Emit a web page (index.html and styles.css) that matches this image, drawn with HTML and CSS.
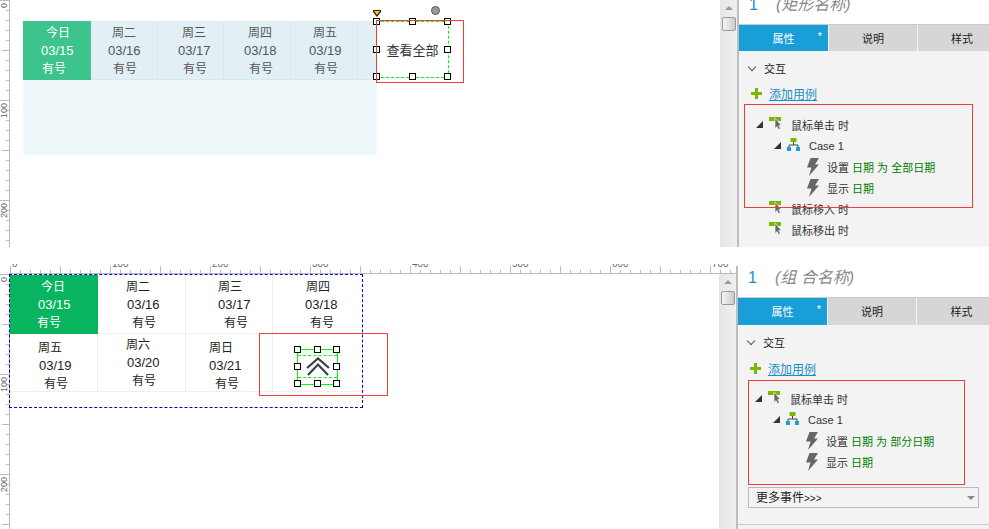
FILE: index.html
```html
<!DOCTYPE html>
<html lang="zh-CN">
<head>
    <meta charset="UTF-8">
    <link rel="stylesheet" href="styles.css">
    <title>查看全部</title>
</head>
<body>
<svg class="defs" width="0" height="0">
    <symbol id="ev" viewBox="0 0 13 13">
        <rect x="0" y="0" width="12" height="4" fill="#7ab800"/>
        <path d="M6 1V11.5L8 9.6 9.6 12.6 11.4 11.8 9.8 8.6 12.4 8.4Z" fill="#666" stroke="#f3f3f3" stroke-width=".7"/>
    </symbol>
    <symbol id="case" viewBox="0 0 13 13">
        <rect x="3.5" y="0" width="6" height="4" fill="#7ab800"/>
        <path d="M6.5 4V7M2 9V7H11V9" fill="none" stroke="#444"/>
        <rect x="0" y="9" width="4" height="4" fill="#1a9ed8"/>
        <rect x="9" y="9" width="4" height="4" fill="#1a9ed8"/>
    </symbol>
    <symbol id="bolt" viewBox="0 0 12 18">
        <path d="M3.5 0H12L8 6.5H12L2 18 4.5 9.5H0Z" fill="#666"/>
    </symbol>
</svg>

<!-- 上半部分 -->
<div class="shot shot-a">
    <div class="work">
        <div class="work-row">
            <div class="ruler-v"><span class="rv-label rv-0">0</span><span class="rv-label rv-100">100</span><span class="rv-label rv-200">200</span></div>
            <div class="stage">
                <div class="tbl">
                    <div class="tbl-head">
                        <div class="tcell ta1 today"><span class="day">今日</span><span class="date">03/15</span><span class="num">有号</span></div>
                        <div class="tcell ta2"><span class="day">周二</span><span class="date">03/16</span><span class="num">有号</span></div>
                        <div class="tcell ta3"><span class="day">周三</span><span class="date">03/17</span><span class="num">有号</span></div>
                        <div class="tcell ta4"><span class="day">周四</span><span class="date">03/18</span><span class="num">有号</span></div>
                        <div class="tcell ta5"><span class="day">周五</span><span class="date">03/19</span><span class="num">有号</span></div>
                        <div class="tcell ta6"></div>
                    </div>
                </div>

                <div class="sel sel-a">
                    <span class="sel-text">查看全部</span>
                    <i class="h tl"></i><i class="h tc"></i><i class="h tr"></i>
                    <i class="h ml"></i><i class="h mr"></i>
                    <i class="h bl"></i><i class="h bc"></i><i class="h br"></i>
                </div>
                <div class="redbox redbox-a"></div>
                <div class="marker"></div>
                <div class="rotate"></div>
            </div>
            <div class="scroll"><div class="scroll-up"></div><div class="scroll-thumb"></div></div>
        </div>
    </div>
    <div class="panel">
        <div class="panel-head"><span class="p-no">1</span><span class="p-name">(矩形名称)</span></div>
        <div class="tabs">
            <div class="tab on">属性<em>*</em></div>
            <div class="tab">说明</div>
            <div class="tab">样式</div>
        </div>
        <div class="sec"><span class="chev"></span>交互</div>
        <div class="add"><b class="plus"></b><a>添加用例</a></div>
        <div class="tree">
            <div class="row l0"><i class="tri"></i><svg class="ico"><use href="#ev"/></svg>鼠标单击 时</div>
            <div class="row l1"><i class="tri"></i><svg class="ico"><use href="#case"/></svg>Case 1</div>
            <div class="row l2"><svg class="bolt"><use href="#bolt"/></svg>设置&nbsp;<span class="g">日期 为 全部日期</span></div>
            <div class="row l2"><svg class="bolt"><use href="#bolt"/></svg>显示&nbsp;<span class="g">日期</span></div>
            <div class="row l0 flat"><svg class="ico"><use href="#ev"/></svg>鼠标移入 时</div>
            <div class="row l0 flat"><svg class="ico"><use href="#ev"/></svg>鼠标移出 时</div>
        </div>
        <div class="redbox redbox-p1"></div>
    </div>
</div>

<!-- 下半部分 -->
<div class="shot shot-b">
    <div class="work">
        <div class="ruler-h"><span>0</span><span>100</span><span>200</span><span>300</span><span>400</span><span>500</span><span>600</span><span>700</span></div>
        <div class="work-row">
            <div class="ruler-v"><span class="rv-label rv-0">0</span><span class="rv-label rv-100">100</span><span class="rv-label rv-200">200</span></div>
            <div class="stage">
                <div class="group">
                    <div class="grp-grid">
                        <div class="gcell g1 today"><span class="day">今日</span><span class="date">03/15</span><span class="num">有号</span></div>
                        <div class="gcell g2"><span class="day">周二</span><span class="date">03/16</span><span class="num">有号</span></div>
                        <div class="gcell g3"><span class="day">周三</span><span class="date">03/17</span><span class="num">有号</span></div>
                        <div class="gcell g4"><span class="day">周四</span><span class="date">03/18</span><span class="num">有号</span></div>
                        <div class="gcell g5"><span class="day">周五</span><span class="date">03/19</span><span class="num">有号</span></div>
                        <div class="gcell g6"><span class="day">周六</span><span class="date">03/20</span><span class="num">有号</span></div>
                        <div class="gcell g7"><span class="day">周日</span><span class="date">03/21</span><span class="num">有号</span></div>
                        <div class="gcell g8"></div>
                    </div>
                    <div class="redbox redbox-b"></div>
                    <div class="sel sel-b">
                        <div class="sel-inner">
                            <svg class="arrows" width="24" height="20" viewBox="0 0 24 20">
                                <path d="M1 11 12 1.5 23 11M2 18 12 7.5 22 18" fill="none" stroke="#3c3c4a" stroke-width="2.2"/>
                            </svg>
                        </div>
                        <i class="h tl"></i><i class="h tc"></i><i class="h tr"></i>
                        <i class="h ml"></i><i class="h mr"></i>
                        <i class="h bl"></i><i class="h bc"></i><i class="h br"></i>
                    </div>
                </div>
            </div>
            <div class="scroll"><div class="scroll-up"></div><div class="scroll-thumb"></div></div>
        </div>
    </div>
    <div class="panel">
        <div class="panel-head"><span class="p-no">1</span><span class="p-name">(组 合名称)</span></div>
        <div class="tabs">
            <div class="tab on">属性<em>*</em></div>
            <div class="tab">说明</div>
            <div class="tab">样式</div>
        </div>
        <div class="sec"><span class="chev"></span>交互</div>
        <div class="add"><b class="plus"></b><a>添加用例</a></div>
        <div class="tree">
            <div class="row l0"><i class="tri"></i><svg class="ico"><use href="#ev"/></svg>鼠标单击 时</div>
            <div class="row l1"><i class="tri"></i><svg class="ico"><use href="#case"/></svg>Case 1</div>
            <div class="row l2"><svg class="bolt"><use href="#bolt"/></svg>设置&nbsp;<span class="g">日期 为 部分日期</span></div>
            <div class="row l2"><svg class="bolt"><use href="#bolt"/></svg>显示&nbsp;<span class="g">日期</span></div>
        </div>
        <div class="more"><span>更多事件<small>&gt;&gt;&gt;</small></span><i class="more-arrow"></i></div>
        <div class="panel-end"></div>
        <div class="redbox redbox-p2"></div>
    </div>
</div>
</body>
</html>
```

FILE: styles.css
```css
body{
    margin: 0;
    padding: 0;
    width: 989px;
    height: 529px;
    overflow: hidden;
    background: #fff;
    font-family: "Liberation Sans", "Noto Sans CJK SC", sans-serif;
    font-size: 11px;
    color: #222;
}
.defs{
    position: absolute;
}
.shot{
    display: flex;
    overflow: hidden;
}
.shot-a{
    height: 247px;
}
.shot-b{
    height: 282px;
}
.work{
    flex: 1;
    min-width: 0;
    display: flex;
    flex-direction: column;
}
.work-row{
    flex: 1;
    display: flex;
    min-height: 0;
}
.stage{
    flex: 1;
    position: relative;
}

/* 标尺 */
.ruler-v{
    width: 10px;
    flex: none;
    position: relative;
    overflow: hidden;
    background:
        linear-gradient(#bbb, #bbb) right top / 1px 100% no-repeat,
        repeating-linear-gradient(to bottom, #bbb 0 1px, transparent 1px 10px) right top / 4px 100% no-repeat,
        repeating-linear-gradient(to bottom, #bbb 0 1px, transparent 1px 50px) right top / 8px 100% no-repeat,
        repeating-linear-gradient(to bottom, #bbb 0 1px, transparent 1px 100px) right top / 10px 100% no-repeat;
}
.ruler-h{
    height: 10px;
    margin-top: 17px;
    margin-left: 9px;
    display: flex;
    overflow: hidden;
    background:
        linear-gradient(#bbb, #bbb) left bottom / 100% 1px no-repeat,
        repeating-linear-gradient(to right, transparent 0 1px, #bbb 1px 2px, transparent 2px 10px) left bottom / 100% 4px no-repeat,
        repeating-linear-gradient(to right, transparent 0 1px, #bbb 1px 2px, transparent 2px 50px) left bottom / 100% 8px no-repeat;
}
.ruler-h span{
    width: 100px;
    flex: none;
    box-sizing: border-box;
    padding-left: 3px;
    margin-top: -6px;
    font-size: 10px;
    line-height: 12px;
    color: #666;
}
.rv-label{
    position: absolute;
    left: 0;
    writing-mode: vertical-rl;
    transform: rotate(180deg);
    font-size: 9px;
    line-height: 9px;
    color: #666;
}
.rv-0{ top: 3px; }
.rv-100{ top: 103px; }
.rv-200{ top: 203px; }

/* 上面的表格 */
.tbl{
    width: 354px;
    height: 134px;
    margin: 21px 0 0 13px;
    background: #eef7f9;
}
.tbl-head{
    display: grid;
    grid-template-columns: 68px 67px 66px 67px 67px 19px;
    height: 59px;
}
.tcell{
    display: flex;
    flex-direction: column;
    align-items: flex-start;
    box-sizing: border-box;
    padding-top: 3px;
    background: #e2f0f5;
    border-right: 1px solid #d8e8ee;
    border-bottom: 1px solid #d8e8ee;
    color: #555;
}
.ta6{ border-right: 0; }
.ta1{ --a: 23px; --b: 18px; --c: 19px; }
.ta2{ --a: 21px; --b: 17px; --c: 22px; }
.ta3{ --a: 24px; --b: 20px; --c: 25px; }
.ta4{ --a: 24px; --b: 20px; --c: 25px; }
.ta5{ --a: 22px; --b: 18px; --c: 23px; }
.tcell.today{
    background: #3cc48c;
    border-color: #3cc48c;
    color: #fff;
}

.day, .date, .num{
    display: block;
    line-height: 18px;
    font-size: 12px;
    white-space: nowrap;
}
.day{ margin-left: var(--a); }
.date{ margin-left: var(--b); font-size: 13px; }
.num{ margin-left: var(--c); }

/* 下面的组合 */
.group{
    width: 354px;
    height: 134px;
    box-sizing: border-box;
    margin-left: -1px;
    border: 1px dashed #0000e0;
    position: relative;
}
.grp-grid{
    display: grid;
    grid-template-columns: 88px 88px 87px 1fr;
    grid-template-rows: 59px 58px;
}
.gcell{
    display: flex;
    flex-direction: column;
    align-items: flex-start;
    box-sizing: border-box;
    border-right: 1px solid #efefef;
    border-bottom: 1px solid #efefef;
    padding-top: 3px;
    color: #222;
}
.g4, .g8{ border-right: 0; }
.g1{ --a: 31px; --b: 28px; --c: 27px; }
.g2{ --a: 28px; --b: 29px; --c: 34px; }
.g3{ --a: 32px; --b: 32px; --c: 38px; }
.g4{ --a: 33px; --b: 32px; --c: 37px; }
.g5{ --a: 28px; --b: 29px; --c: 34px; padding-top: 5px; }
.g6{ --a: 28px; --b: 29px; --c: 34px; padding-top: 2px; }
.g7{ --a: 23px; --b: 23px; --c: 29px; padding-top: 5px; }
.gcell.today{
    background: #09b45f;
    border-color: #09b45f;
    color: #fff;
}

/* 选中框 */
.sel{
    position: absolute;
    box-sizing: border-box;
}
.sel-a{
    left: 366px;
    top: 21px;
    width: 73px;
    height: 57px;
    border: 1px dashed #0f0;
    display: flex;
    align-items: center;
    justify-content: center;
}
.sel-text{
    font-size: 13px;
    color: #333;
}
.sel-b{
    left: 287px;
    top: 74px;
    width: 41px;
    height: 36px;
    border: 1px solid #0f0;
}
.sel-inner{
    box-sizing: border-box;
    height: 23px;
    margin-top: 5px;
    border-top: 1px dashed #0f0;
    border-bottom: 1px dashed #0f0;
    display: flex;
    justify-content: center;
    align-items: center;
}
.arrows{
    display: block;
}
.h{
    position: absolute;
    width: 7px;
    height: 7px;
    box-sizing: border-box;
    background: #fff;
    border: 1px solid #000;
    margin: -4px 0 0 -4px;
}
.tl, .tc, .tr{ top: 0; }
.ml, .mr{ top: 50%; }
.bl, .bc, .br{ top: 100%; }
.tl, .ml, .bl{ left: 0; }
.tc, .bc{ left: 50%; }
.tr, .mr, .br{ left: 100%; }

.redbox{
    position: absolute;
    box-sizing: border-box;
    border: 1px solid #f23c3c;
    pointer-events: none;
}
.redbox-a{ left: 366px; top: 20px; width: 88px; height: 63px; }
.redbox-b{ left: 249px; top: 58px; width: 129px; height: 63px; }
.redbox-p1{ left: 5px; top: 104px; width: 229px; height: 104px; }
.redbox-p2{ left: 10px; top: 114px; width: 217px; height: 105px; }

.marker{
    position: absolute;
    left: 363px;
    top: 10px;
    width: 8px;
    height: 7px;
    background: #222;
    clip-path: polygon(0 0, 100% 0, 100% 30%, 50% 100%, 0 30%);
}
.marker::after{
    content: "";
    display: block;
    width: 6px;
    height: 4px;
    margin: 1px;
    background: #f7d000;
    clip-path: polygon(0 0, 100% 0, 50% 100%);
}
.rotate{
    position: absolute;
    left: 421px;
    top: 6px;
    width: 9px;
    height: 9px;
    box-sizing: border-box;
    border-radius: 50%;
    background: #999;
    border: 1px solid #555;
}

/* 滚动条 */
.scroll{
    width: 17px;
    flex: none;
    background: linear-gradient(to right, #e6e6e6, #f0f0f0);
    display: flex;
    flex-direction: column;
    align-items: center;
}
.scroll-up{
    width: 0;
    height: 0;
    margin-top: 6px;
    border-left: 4px solid transparent;
    border-right: 4px solid transparent;
    border-bottom: 4px solid #999;
}
.scroll-thumb{
    width: 14px;
    height: 14px;
    margin-top: 7px;
    box-sizing: border-box;
    border: 1px solid #999;
    border-radius: 2px;
    background: linear-gradient(to right, #f4f4f4, #ccc);
}

/* 右侧面板 */
.panel{
    flex: none;
    width: 252px;
    box-sizing: border-box;
    position: relative;
    border-left: 2px solid #bdbdbd;
    background: #f3f3f3;
}
.shot-b .panel{
    width: 253px;
    margin-top: 19px;
}
.panel-head{
    height: 24px;
    background: #fff;
    border-bottom: 1px solid #ccc;
    display: flex;
    align-items: center;
    overflow: hidden;
    line-height: 24px;
}
.shot-a .panel-head span{
    position: relative;
    top: -7px;
}
.shot-b .panel-head{
    height: 31px;
    align-items: flex-start;
}
.p-no{
    margin-left: 10px;
    width: 27px;
    font-size: 16px;
    color: #1a8ed0;
}
.p-name{
    font-size: 16px;
    font-style: italic;
    color: #888;
}
.tabs{
    display: flex;
    height: 26px;
    gap: 1px;
}
.shot-b .tabs{
    height: 27px;
}
.tab{
    width: 88px;
    background: #d6d6d6;
    text-align: center;
    line-height: 28px;
    position: relative;
}
.tab:last-child{
    flex: 1;
    padding-left: 17px;
}
.tab.on{
    width: 89px;
    background: #1a9ed8;
    color: #fff;
}
.tab em{
    position: absolute;
    right: 6px;
    top: -3px;
    font-style: normal;
}
.sec{
    display: flex;
    align-items: center;
    height: 18px;
    margin-top: 8px;
    padding-left: 25px;
    position: relative;
}
.chev{
    position: absolute;
    left: 10px;
    top: 5px;
    width: 6px;
    height: 6px;
    box-sizing: border-box;
    border-right: 1px solid #555;
    border-bottom: 1px solid #555;
    transform: rotate(45deg);
}
.add{
    display: flex;
    align-items: center;
    height: 18px;
    margin-top: 7px;
    padding-left: 12px;
    gap: 7px;
}
.shot-b .add{
    margin-top: 8px;
}
.add a{
    font-size: 12px;
    color: #1a8ec8;
    text-decoration: underline;
}
.plus{
    width: 11px;
    height: 11px;
    background:
        linear-gradient(#7ab800, #7ab800) center / 100% 3px no-repeat,
        linear-gradient(#7ab800, #7ab800) center / 3px 100% no-repeat;
}
.tree{
    margin-top: 12px;
}
.shot-b .tree{
    margin-top: 11px;
}
.row{
    display: flex;
    align-items: center;
    height: 21px;
    white-space: pre;
    color: #333;
}
.tri{
    width: 7px;
    height: 7px;
    margin-right: 6px;
    background: #333;
    clip-path: polygon(100% 0, 100% 100%, 0 100%);
}
.ico{
    width: 13px;
    height: 13px;
    margin-right: 9px;
    position: relative;
    top: -1px;
}
.bolt{
    width: 12px;
    height: 18px;
    margin-right: 8px;
}
.l0{ padding-left: 17px; }
.l0.flat{ padding-left: 30px; }
.l1{ padding-left: 35px; }
.l2{ padding-left: 68px; }
.g{
    color: #008000;
}
.more{
    height: 21px;
    margin: 15px 10px 0 10px;
    box-sizing: border-box;
    border: 1px solid #bbb;
    background: #f3f3f3;
    display: flex;
    align-items: center;
    justify-content: space-between;
    padding: 1px 3px 0 7px;
    font-size: 12px;
    line-height: 19px;
}
.more small{
    font-size: 10px;
}
.more-arrow{
    width: 0;
    height: 0;
    border-left: 4px solid transparent;
    border-right: 4px solid transparent;
    border-top: 4px solid #888;
}
.panel-end{
    margin-top: 16px;
    border-top: 1px solid #ccc;
}
```
